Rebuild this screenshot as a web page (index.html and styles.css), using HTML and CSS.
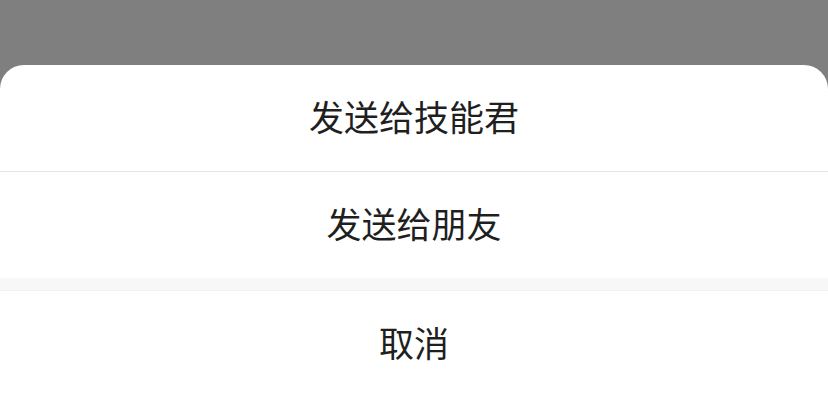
FILE: index.html
```html
<!DOCTYPE html>
<html lang="zh">
<head>
<meta charset="utf-8">
<link rel="stylesheet" href="styles.css">
</head>
<body>
<div class="mask">
  <div class="sheet">
    <div class="item">发送给技能君</div>
    <div class="item">发送给朋友</div>
    <div class="gap"></div>
    <div class="item cancel">取消</div>
  </div>
</div>
</body>
</html>
```
FILE: styles.css
```css
html, body {
  margin: 0;
  padding: 0;
  height: 100%;
  overflow: hidden;
}
.mask {
  height: 100%;
  background: #7f7f7f;
  display: flex;
  flex-direction: column;
  justify-content: flex-start;
  padding-top: 65px;
  box-sizing: border-box;
}
.sheet {
  background: #ffffff;
  border-radius: 24px 24px 0 0;
  flex: 1;
  display: flex;
  flex-direction: column;
  font-family: "Noto Sans CJK SC", "Noto Sans", sans-serif;
}
.item {
  height: 106px;
  box-sizing: border-box;
  padding-bottom: 5px;
  display: flex;
  align-items: center;
  justify-content: center;
  font-size: 35px;
  color: #1f1f1f;
}
.item + .item {
  border-top: 1px solid #e5e5e5;
  height: 107px;
}
.gap {
  height: 12px;
  background: #f7f7f7;
  border-bottom: 1px solid #f0f0f0;
}
.gap + .item {
  border-top: none;
  height: 106px;
}
```
